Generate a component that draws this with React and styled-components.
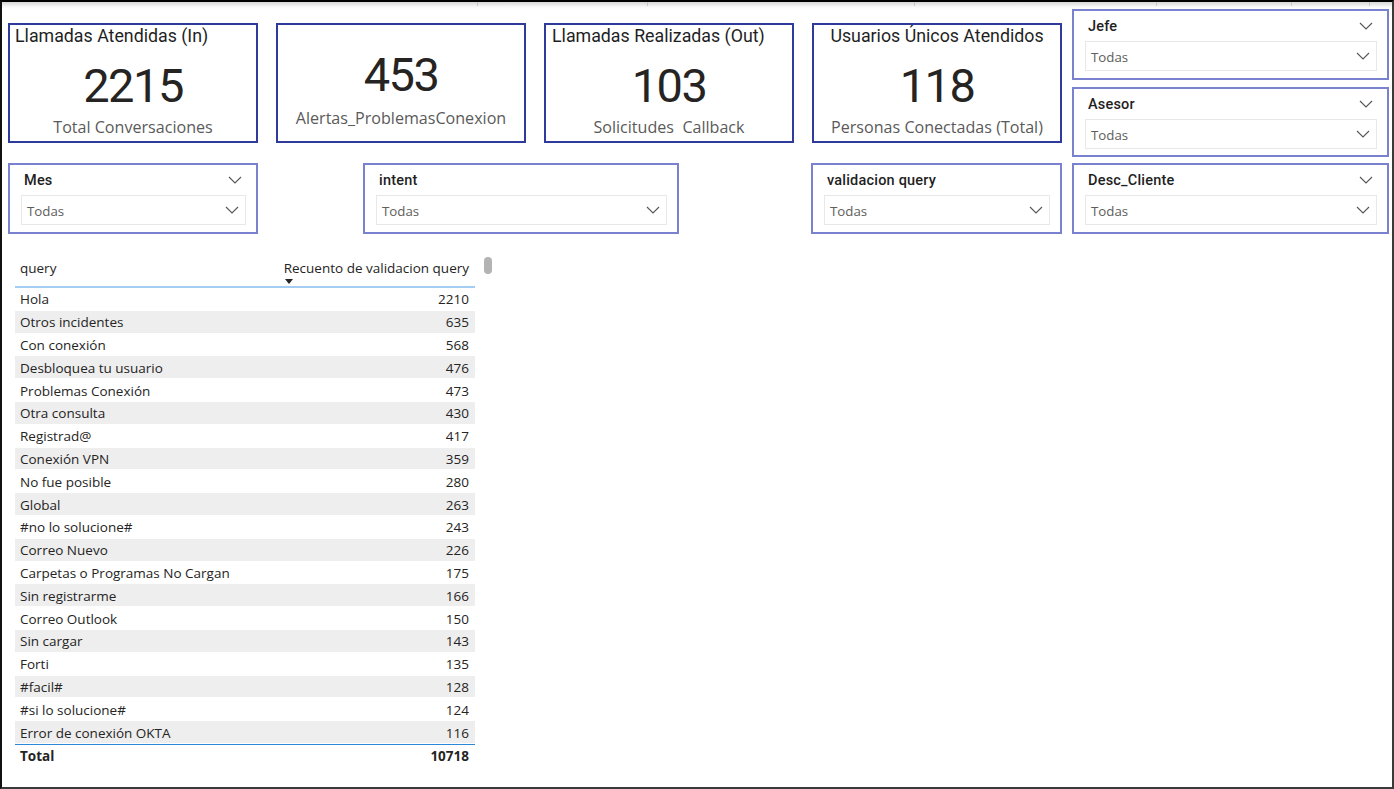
import React from "react";
import styled, { createGlobalStyle } from "styled-components";

const Global = createGlobalStyle`
  html, body { margin: 0; padding: 0; background: #fff; }
  body { font-family: "Open Sans", "Noto Sans", sans-serif; color: #252423; }
  * { box-sizing: border-box; }
`;

const Frame = styled.div`
  width: 1394px;
  height: 789px;
  border-top: 2px solid #000;
  border-left: 2px solid #111;
  border-right: 2px solid #3a3a3a;
  border-bottom: 2px solid #3a3a3a;
  overflow: hidden;
  display: flex;
  flex-direction: column;
`;

const Strip = styled.div`
  height: 7px;
  flex: none;
  display: flex;
  background: linear-gradient(#d6d6d6, #f4f4f4 60%, #ffffff);
`;

const Tick = styled.div`
  width: ${(p) => p.$w}px;
  flex: none;
  border-right: 1px solid ${(p) => (p.$last ? "transparent" : "#c8c8c8")};
  height: 4px;
`;

const Content = styled.div`
  padding: 0 0 0 6px;
  display: flex;
  flex-direction: column;
`;

const TopRow = styled.div`
  display: flex;
  align-items: flex-start;
`;

const Cards = styled.div`
  display: flex;
  gap: 18px;
  margin-top: 14px;
`;

const Card = styled.div`
  width: 250px;
  height: 120px;
  border: 2px solid #2e3a9c;
  display: flex;
  flex-direction: column;
  align-items: center;
`;

const CardTitle = styled.div`
  align-self: ${(p) => (p.$center ? "center" : "flex-start")};
  padding-left: ${(p) => (p.$center ? 0 : p.$pad)}px;
  font-family: Roboto, "Noto Sans", sans-serif;
  font-size: 17.8px;
  line-height: 21px;
  height: 21px;
  color: #1f1f1f;
  white-space: nowrap;
`;

const CardValue = styled.div`
  margin-top: ${(p) => p.$top}px;
  font-family: Roboto, "Noto Sans", sans-serif;
  font-size: 47px;
  line-height: 50px;
  height: 50px;
  letter-spacing: -1.5px;
  color: #252423;
`;

const CardLabel = styled.div`
  margin-top: ${(p) => p.$top}px;
  font-size: 16.1px;
  line-height: 20px;
  color: #5a5a5a;
  white-space: nowrap;
`;

const RightCol = styled.div`
  margin-left: 10px;
  display: flex;
  flex-direction: column;
  gap: 7px;
`;

const Slicer = styled.div`
  width: ${(p) => p.$w}px;
  height: ${(p) => p.$h || 71}px;
  margin-left: ${(p) => p.$ml || 0}px;
  border: 2px solid #7a82cf;
  padding: 0 10px 0 11px;
  display: flex;
  flex-direction: column;
  flex: none;
`;

const SlicerHead = styled.div`
  height: 30px;
  display: flex;
  align-items: center;
  justify-content: space-between;
  padding-left: 3px;
  padding-right: 4px;
`;

const SlicerTitle = styled.div`
  font-family: Roboto, "Noto Sans", sans-serif;
  font-weight: 500;
  font-size: 14.5px;
  letter-spacing: 0.2px;
  color: #1f1f1f;
  padding-top: 1px;
`;

const Dropdown = styled.div`
  height: 30px;
  border: 1px solid #e8e8e8;
  display: flex;
  align-items: center;
  justify-content: space-between;
  padding: 0 6px 0 5px;
`;

const DropText = styled.span`
  font-size: 13.3px;
  color: #605e5c;
  padding-top: 2px;
`;

const Chevron = ({ color = "#666" }) => (
  <svg width="14" height="8" viewBox="0 0 14 8">
    <path d="M1 1 L7 7 L13 1" fill="none" stroke={color} strokeWidth="1.1" />
  </svg>
);

const SecondRow = styled.div`
  display: flex;
  margin-top: 6px;
`;

const TableArea = styled.div`
  display: flex;
  align-items: flex-start;
  margin-top: 21px;
  margin-left: 7px;
`;

const Table = styled.div`
  width: 460px;
  font-size: 13.5px;
  color: #252423;
`;

const HeadRow = styled.div`
  height: 33px;
  display: flex;
  justify-content: space-between;
  border-bottom: 2px solid #a3cdf3;
  padding: 0 6px 0 5px;
`;

const HeadCell = styled.div`
  display: flex;
  flex-direction: column;
  align-items: flex-start;
  padding-top: 5px;
  line-height: 17px;
  color: #252423;
`;

const SortArrow = styled.div`
  width: 0;
  height: 0;
  margin-left: 1px;
  margin-top: 2px;
  border-left: 4px solid transparent;
  border-right: 4px solid transparent;
  border-top: 5px solid #252423;
`;

const Row = styled.div`
  height: 22.8px;
  display: flex;
  align-items: center;
  justify-content: space-between;
  padding: 1px 6px 0 5px;
  background: ${(p) => (p.$alt ? "#eeeeee" : "#ffffff")};
  border-bottom: 1px solid #fff;
  white-space: nowrap;
`;

const TotalRow = styled.div`
  height: 24px;
  display: flex;
  align-items: center;
  justify-content: space-between;
  padding: 0 6px 0 5px;
  border-top: 1px solid #2b88d8;
  font-weight: 700;
`;

const Thumb = styled.div`
  width: 8px;
  height: 17px;
  margin-left: 9px;
  margin-top: 2px;
  border-radius: 4px;
  background: #b3b3b3;
`;

const rows = [
  ["Hola", 2210],
  ["Otros incidentes", 635],
  ["Con conexión", 568],
  ["Desbloquea tu usuario", 476],
  ["Problemas Conexión", 473],
  ["Otra consulta", 430],
  ["Registrad@", 417],
  ["Conexión VPN", 359],
  ["No fue posible", 280],
  ["Global", 263],
  ["#no lo solucione#", 243],
  ["Correo Nuevo", 226],
  ["Carpetas o Programas No Cargan", 175],
  ["Sin registrarme", 166],
  ["Correo Outlook", 150],
  ["Sin cargar", 143],
  ["Forti", 135],
  ["#facil#", 128],
  ["#si lo solucione#", 124],
  ["Error de conexión OKTA", 116],
];

function SlicerBox({ title, w, h, ml, headChevron }) {
  return (
    <Slicer $w={w} $h={h} $ml={ml}>
      <SlicerHead>
        <SlicerTitle>{title}</SlicerTitle>
        {headChevron && <Chevron color="#555" />}
      </SlicerHead>
      <Dropdown>
        <DropText>Todas</DropText>
        <Chevron color="#555" />
      </Dropdown>
    </Slicer>
  );
}

export default function App() {
  return (
    <>
      <Global />
      <Frame>
        <Strip>
          <Tick $w={476} />
          <Tick $w={170} />
          <Tick $w={267} />
          <Tick $w={242} />
          <Tick $w={135} />
          <Tick $w={78} />
          <Tick $w={20} $last />
        </Strip>
        <Content>
          <TopRow>
            <Cards>
              <Card>
                <CardTitle $pad={5}>Llamadas Atendidas (In)</CardTitle>
                <CardValue $top={15}>2215</CardValue>
                <CardLabel $top={6}>Total Conversaciones</CardLabel>
              </Card>
              <Card>
                <CardValue $top={25}>453</CardValue>
                <CardLabel $top={8}>Alertas_ProblemasConexion</CardLabel>
              </Card>
              <Card>
                <CardTitle $pad={6}>Llamadas Realizadas (Out)</CardTitle>
                <CardValue $top={15}>103</CardValue>
                <CardLabel $top={6}>Solicitudes&nbsp; Callback</CardLabel>
              </Card>
              <Card>
                <CardTitle $center>Usuarios Únicos Atendidos</CardTitle>
                <CardValue $top={15}>118</CardValue>
                <CardLabel $top={6}>Personas Conectadas (Total)</CardLabel>
              </Card>
            </Cards>
            <RightCol>
              <SlicerBox title="Jefe" w={317} h={71} headChevron />
              <SlicerBox title="Asesor" w={317} h={70} headChevron />
            </RightCol>
          </TopRow>
          <SecondRow>
            <SlicerBox title="Mes" w={250} headChevron />
            <SlicerBox title="intent" w={316} ml={105} />
            <SlicerBox title="validacion query" w={251} ml={132} />
            <SlicerBox title="Desc_Cliente" w={317} ml={10} headChevron />
          </SecondRow>
          <TableArea>
            <Table>
              <HeadRow>
                <HeadCell>query</HeadCell>
                <HeadCell>
                  Recuento de validacion query
                  <SortArrow />
                </HeadCell>
              </HeadRow>
              {rows.map(([q, n], i) => (
                <Row key={q} $alt={i % 2 === 1}>
                  <span>{q}</span>
                  <span>{n}</span>
                </Row>
              ))}
              <TotalRow>
                <span>Total</span>
                <span>10718</span>
              </TotalRow>
            </Table>
            <Thumb />
          </TableArea>
        </Content>
      </Frame>
    </>
  );
}
